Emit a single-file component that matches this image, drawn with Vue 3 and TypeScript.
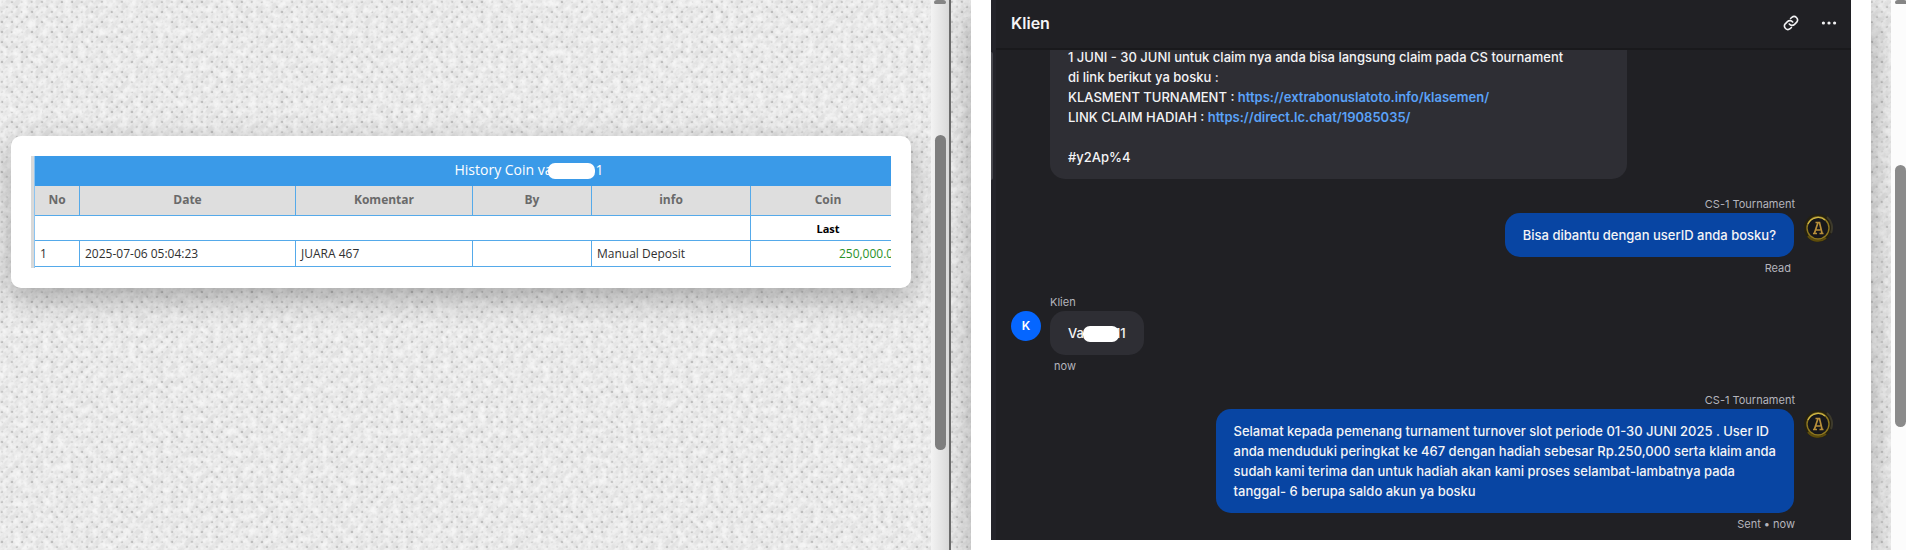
<script setup lang="ts">
interface HistoryRow {
  no: number
  date: string
  comment: string
  by: string
  info: string
  coin: string
}

const columns: string[] = ['No', 'Date', 'Komentar', 'By', 'info', 'Coin']
const rows: HistoryRow[] = [
  { no: 1, date: '2025-07-06 05:04:23', comment: 'JUARA 467', by: '', info: 'Manual Deposit', coin: '250,000.00' },
]
const award: string[] = [
  'Selamat kepada pemenang turnament turnover slot periode 01-30 JUNI 2025 . User ID',
  'anda menduduki peringkat ke 467 dengan hadiah sebesar Rp.250,000 serta klaim anda',
  'sudah kami terima dan untuk hadiah akan kami proses selambat-lambatnya pada',
  'tanggal- 6 berupa saldo akun ya bosku',
]
</script>

<template>
  <div class="page">
    <svg class="texture" aria-hidden="true">
      <defs>
        <pattern id="weave" width="10" height="10" patternUnits="userSpaceOnUse">
          <rect width="10" height="10" fill="#e2e2e2" />
          <path d="M-1 6L6 -1M4 11L11 4" stroke="#ececec" stroke-width="2" />
          <circle cx="2" cy="2" r="1.3" fill="#bdbdbd" />
          <circle cx="7" cy="7" r="1.3" fill="#c4c4c4" />
        </pattern>
        <filter id="grain" x="0" y="0" width="100%" height="100%">
          <feTurbulence type="fractalNoise" baseFrequency="0.14" numOctaves="3" seed="4" />
          <feColorMatrix values="0 0 0 0 0.91  0 0 0 0 0.91  0 0 0 0 0.91  2.2 0 0 0 -0.75" />
        </filter>
      </defs>
      <rect width="100%" height="100%" fill="url(#weave)" />
      <rect width="100%" height="100%" filter="url(#grain)" />
    </svg>

    <section class="pane left">
      <div class="content">
        <div class="card">
          <div class="clip">
            <table>
              <colgroup>
                <col class="c-no" /><col class="c-date" /><col class="c-comment" />
                <col class="c-by" /><col class="c-info" /><col class="c-coin" />
              </colgroup>
              <thead>
                <tr class="title">
                  <th colspan="6">History Coin va<span class="mask wide"></span>1</th>
                </tr>
                <tr class="heads">
                  <th v-for="c in columns" :key="c" scope="col">{{ c }}</th>
                </tr>
              </thead>
              <tbody>
                <tr class="last">
                  <td colspan="5"></td>
                  <td>Last</td>
                </tr>
                <tr v-for="r in rows" :key="r.no" class="entry">
                  <td>{{ r.no }}</td>
                  <td>{{ r.date }}</td>
                  <td>{{ r.comment }}</td>
                  <td>{{ r.by }}</td>
                  <td>{{ r.info }}</td>
                  <td class="amount">{{ r.coin }}</td>
                </tr>
              </tbody>
            </table>
          </div>
        </div>
      </div>
      <div class="track">
        <span class="arrow"></span>
        <span class="thumb"></span>
      </div>
    </section>

    <section class="pane right">
      <div class="content">
        <div class="sheet">
          <div class="chat">
            <header>
              <h1>Klien</h1>
              <button type="button" aria-label="Copy link">
                <svg width="16" height="16" viewBox="0 0 24 24" fill="none" stroke="#f2f2f4" stroke-width="2.4" stroke-linecap="round" stroke-linejoin="round">
                  <path d="M9.5 13.5a5.2 5.2 0 0 0 7.8.5l3.3-3.3a5.2 5.2 0 0 0-7.3-7.3l-1.9 1.9" />
                  <path d="M14.5 10.5a5.2 5.2 0 0 0-7.8-.5l-3.3 3.3a5.2 5.2 0 0 0 7.3 7.3l1.9-1.9" />
                </svg>
              </button>
              <button type="button" aria-label="More">
                <svg width="16" height="16" viewBox="0 0 16 16" fill="#f2f2f4">
                  <circle cx="2.4" cy="8" r="1.6" /><circle cx="8" cy="8" r="1.6" /><circle cx="13.6" cy="8" r="1.6" />
                </svg>
              </button>
            </header>

            <div class="feed">
              <div class="msg client">
                <div class="bubble offer">
                  1 JUNI - 30 JUNI untuk claim nya anda bisa langsung claim pada CS tournament<br />
                  di link berikut ya bosku :<br />
                  KLASMENT TURNAMENT : <a href="https://extrabonuslatoto.info/klasemen/">https://extrabonuslatoto.info/klasemen/</a><br />
                  LINK CLAIM HADIAH : <a href="https://direct.lc.chat/19085035/">https://direct.lc.chat/19085035/</a><br />
                  <br />
                  #y2Ap%4
                </div>
              </div>

              <div class="msg agent">
                <div class="name">CS-1 Tournament</div>
                <div class="line">
                  <div class="bubble">Bisa dibantu dengan userID anda bosku?</div>
                  <svg class="crest" width="30" height="30" viewBox="0 0 30 30">
                    <circle cx="15" cy="15" r="14" fill="#252111" />
                    <path d="M5 23A13 13 0 0 0 23 25" fill="none" stroke="#5d4c0b" stroke-width="2" />
                    <path d="M24 4A14 14 0 0 1 28 20" fill="none" stroke="#3d3a2c" stroke-width="2" />
                    <circle cx="15" cy="15" r="11" fill="#17171a" stroke="#8f7820" stroke-width="1.4" />
                    <path d="M5 11A11 11 0 0 1 22 7" fill="none" stroke="#d0b848" stroke-width="1.2" />
                    <path d="M10 20.5h4M16.5 20.5h4M11.500 20L15 9.500h1.500L19 20M12.800 17h4.500M12.500 9.500h3" fill="none" stroke="#b88f3a" stroke-width="1.7" />
                  </svg>
                </div>
                <div class="status read">Read</div>
              </div>

              <div class="msg client">
                <div class="name">Klien</div>
                <div class="line">
                  <span class="avatar">K</span>
                  <div class="bubble">Va<span class="mask"></span>11</div>
                </div>
                <div class="status">now</div>
              </div>

              <div class="msg agent">
                <div class="name">CS-1 Tournament</div>
                <div class="line">
                  <div class="bubble">
                    <template v-for="(l, i) in award" :key="i"><br v-if="i" />{{ l }}</template>
                  </div>
                  <svg class="crest" width="30" height="30" viewBox="0 0 30 30">
                    <circle cx="15" cy="15" r="14" fill="#252111" />
                    <path d="M5 23A13 13 0 0 0 23 25" fill="none" stroke="#5d4c0b" stroke-width="2" />
                    <path d="M24 4A14 14 0 0 1 28 20" fill="none" stroke="#3d3a2c" stroke-width="2" />
                    <circle cx="15" cy="15" r="11" fill="#17171a" stroke="#8f7820" stroke-width="1.4" />
                    <path d="M5 11A11 11 0 0 1 22 7" fill="none" stroke="#d0b848" stroke-width="1.2" />
                    <path d="M10 20.5h4M16.5 20.5h4M11.500 20L15 9.500h1.500L19 20M12.800 17h4.500M12.500 9.500h3" fill="none" stroke="#b88f3a" stroke-width="1.7" />
                  </svg>
                </div>
                <div class="status">Sent • now</div>
              </div>
            </div>
          </div>
        </div>
      </div>
      <div class="track">
        <span class="arrow"></span>
        <span class="thumb"></span>
      </div>
    </section>
  </div>
</template>

<style>
body {
  margin: 0;
  overflow: hidden;
}
</style>

<style scoped>
.page {
  position: relative;
  display: flex;
  height: 100vh;
  overflow: hidden;
  background: #e5e5e5;
  isolation: isolate;
}
.texture {
  position: absolute;
  inset: 0;
  z-index: -1;
  width: 100%;
  height: 100%;
}
.pane {
  display: flex;
  box-sizing: border-box;
  min-width: 0;
  overflow: hidden;
}
.left {
  width: calc(50% - 2px);
  border-right: 2px solid #6a6a6a;
}
.right {
  width: calc(50% + 2px);
}
.content {
  flex: 1;
  min-width: 0;
}
.left .content {
  padding: 136px 20px 0 11px;
}
.right .content {
  padding: 0 20px;
}

/* coin history */
.card {
  padding: 20px;
  border-radius: 10px;
  background: #fff;
  box-shadow: 0 10px 30px rgba(0, 0, 0, 0.3);
}
.clip {
  overflow: hidden;
  border-left: 3px solid #d9d9d9;
}
table {
  width: calc(100% + 14px);
  table-layout: fixed;
  border-collapse: separate;
  border-spacing: 0;
  border-left: 1px solid #8cc4f0;
  font: 12px "Open Sans", "Noto Sans", sans-serif;
  color: #303030;
}
.c-no { width: 45px; }
.c-date { width: 216px; }
.c-comment { width: 177px; }
.c-by { width: 119px; }
.c-info { width: 159px; }
.c-coin { width: 155px; }
th, td {
  box-sizing: border-box;
  padding: 0 5px;
  border-right: 1px solid #55aaea;
  border-bottom: 1px solid #55aaea;
  white-space: nowrap;
}
.title th {
  height: 30px;
  padding: 0 0 2px 118px;
  border-color: #3a9ae8;
  background: #3a9ae8;
  color: #fff;
  font-size: 14px;
  font-weight: 400;
}
.heads th {
  height: 30px;
  padding-bottom: 2px;
  background: #dedede;
  color: #6a6a6a;
  font-weight: 700;
}
.last td {
  height: 25px;
  color: #000;
  font-size: 11px;
  font-weight: 700;
  text-align: center;
}
.entry td {
  height: 26px;
}
.entry .amount {
  color: #2a922a;
  text-align: right;
}
tbody::after {
  content: "";
  display: block;
  height: 1px;
}
.mask {
  display: inline-block;
  width: 36px;
  height: 16px;
  margin: 0 -4px 0 -1px;
  border-radius: 7px;
  background: #fff;
  position: relative;
  vertical-align: middle;
}
.mask.wide {
  width: 47px;
  margin: 0 1px 0 -5px;
}

/* scroll bars */
.track {
  display: flex;
  flex-direction: column;
  align-items: center;
  box-sizing: border-box;
  flex: none;
}
.left .track {
  width: 18px;
  background: linear-gradient(90deg, #f3f3f3, #d9d9d9);
}
.right .track {
  width: 15px;
  padding-left: 4px;
  background: #fcfcfc;
}
.arrow {
  width: 12px;
  height: 4px;
  border-radius: 5px 5px 2px 2px;
  background: #858585;
}
.thumb {
  width: 11px;
  border-radius: 6px;
}
.left .thumb {
  height: 315px;
  margin-top: 131px;
  background: #7e7e7e;
}
.right .thumb {
  height: 262px;
  margin-top: 161px;
  background: #8b8b8b;
}

/* chat */
.sheet {
  box-sizing: border-box;
  height: 100%;
  padding: 0 20px 10px;
  background: #fff;
  box-shadow: 0 10px 30px rgba(0, 0, 0, 0.3);
}
.chat {
  position: relative;
  display: flex;
  flex-direction: column;
  box-sizing: border-box;
  height: 100%;
  border-left: 5px solid #24242a;
  background: #202024;
  color: #f4f4f6;
  font: 500 13px/20px Inter, sans-serif;
}
.chat::before {
  content: "";
  position: absolute;
  top: 52px;
  left: -5px;
  width: 2px;
  height: 128px;
  border-radius: 0 2px 2px 0;
  background: #48484e;
}
header {
  display: flex;
  align-items: center;
  gap: 22px;
  box-sizing: border-box;
  height: 50px;
  flex: none;
  padding: 0 14px 2px 15px;
  border-bottom: 2px solid #19191c;
}
h1 {
  flex: 1;
  margin: 0;
  font-size: 16px;
  font-weight: 600;
}
button {
  display: flex;
  padding: 0;
  border: 0;
  background: none;
}
.feed {
  display: flex;
  flex: 1;
  flex-direction: column;
  justify-content: flex-end;
  gap: 16px;
  min-height: 0;
  padding-bottom: 7px;
  overflow: hidden;
}
.msg {
  display: flex;
  flex-direction: column;
  flex: none;
}
.client {
  align-items: flex-start;
  padding-left: 54px;
}
.agent {
  align-items: flex-end;
  padding-right: 18px;
}
.line {
  display: flex;
  align-items: flex-start;
  gap: 9px;
}
.client .line {
  margin-left: -39px;
}
.bubble {
  padding: 12px 18px;
  border-radius: 15px;
  background: #2e2e34;
}
.agent .bubble {
  background: #0845a3;
}
.offer {
  box-sizing: border-box;
  width: 577px;
}
a {
  color: #5aa2f8;
  font-weight: 600;
  text-decoration: none;
}
.name, .status {
  color: #b4b4bc;
  font-size: 11px;
  font-weight: 400;
  line-height: 18px;
}
.agent .name, .agent .status {
  margin-right: 38px;
}
.status {
  padding: 2px 0 0 4px;
}
.agent .read {
  margin-right: 42px;
}
.avatar {
  display: grid;
  place-items: center;
  width: 30px;
  height: 30px;
  border-radius: 50%;
  background: #0566ff;
  color: #fff;
  font-size: 12px;
  font-weight: 600;
}
.crest {
  flex: none;
}
</style>
